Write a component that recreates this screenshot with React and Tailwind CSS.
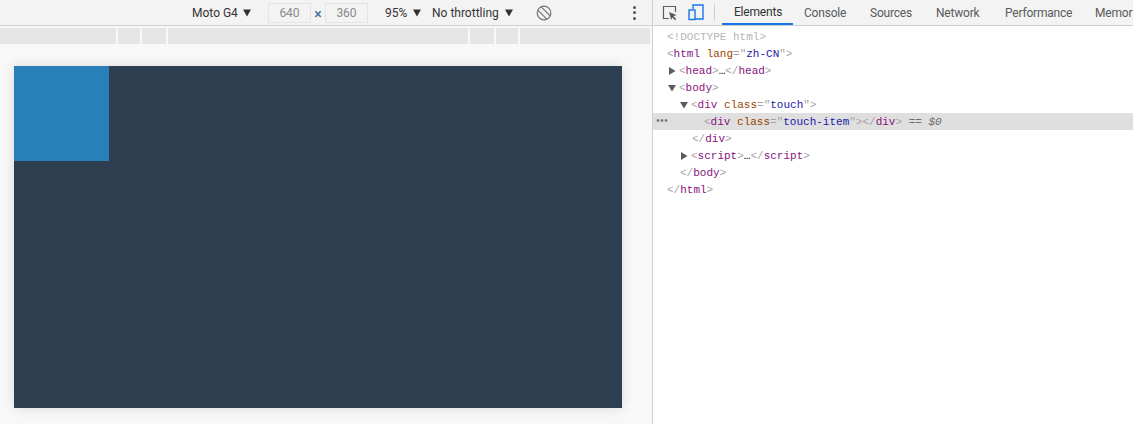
import React from "react";

const uiFont = "font-['Roboto','Noto_Sans',sans-serif]";

function Caret({ open, className = "" }) {
  return (
    <svg width="8" height="8" viewBox="0 0 8 8" className={`shrink-0 ${className}`}>
      {open ? <path d="M0 1h8L4 7.5z" fill="#5f5a60" /> : <path d="M1 0l6.5 4L1 8z" fill="#5f5a60" />}
    </svg>
  );
}

function DownTri({ className = "" }) {
  return (
    <svg width="8" height="8" viewBox="0 0 8 8" className={`shrink-0 ${className}`}>
      <path d="M0 .5h8L4 7.5z" fill="#333" />
    </svg>
  );
}

const B = ({ children }) => <span className="text-[#a89fa8]">{children}</span>;
const T = ({ children }) => <span className="text-[#881280]">{children}</span>;
const A = ({ children }) => <span className="text-[#994500]">{children}</span>;
const V = ({ children }) => <span className="text-[#1a1aa6]">{children}</span>;

function Row({ pad, caret, selected, children }) {
  return (
    <div className={`relative flex h-[17px] items-center whitespace-pre pt-[2px] ${pad} ${selected ? "bg-[#dfdfdf]" : ""}`}>
      {caret !== undefined && <Caret open={caret} className="mr-[3px] ml-[-11px] mt-[-2px]" />}
      <span>{children}</span>
    </div>
  );
}

function App() {
  const tabs = [
    ["Elements", "w-[71px] pl-[12px] text-[#333] border-b-2 border-[#1a73e8]"],
    ["Console", "w-[66px] pl-[11px] text-[#5a5a5a]"],
    ["Sources", "w-[66px] pl-[11px] text-[#5a5a5a]"],
    ["Network", "w-[69px] pl-[11px] text-[#5a5a5a]"],
    ["Performance", "w-[90px] pl-[11px] text-[#5a5a5a]"],
    ["Memory", "w-[60px] pl-[11px] text-[#5a5a5a]"],
  ];

  return (
    <div className={`flex h-[424px] w-[1133px] overflow-hidden bg-white ${uiFont}`}>
      <div className="flex w-[653px] shrink-0 flex-col border-r border-[#cfcfcf] bg-[#f8f8f8]">
        <div className="flex h-[26px] shrink-0 items-center border-b border-[#cfcfcf] bg-[#f3f3f3] pl-[192px] text-[12px] text-[#333]">
          <span className="w-[51px]">Moto G4</span>
          <DownTri />
          <div className="ml-[17px] flex h-[20px] w-[43px] items-center justify-center border border-[#e4e4e4] text-[#8a8a8a]">640</div>
          <span className="mt-[3px] w-[14px] text-center text-[14px] font-medium text-[#3d6f9e]">×</span>
          <div className="flex h-[20px] w-[43px] items-center justify-center border border-[#e4e4e4] text-[#8a8a8a]">360</div>
          <span className="ml-[17px] w-[25px]">95%</span>
          <DownTri className="ml-[3px]" />
          <span className="ml-[11px] w-[70px] whitespace-nowrap">No throttling</span>
          <DownTri className="ml-[3px]" />
          <svg width="16" height="16" viewBox="0 0 16 16" className="ml-[23px]" fill="none" stroke="#77727a" strokeWidth="1.2">
            <circle cx="8" cy="8" r="6.8" />
            <path d="M5.2 1.8l9 9M1.8 5.2l9 9" />
          </svg>
          <div className="ml-[81px] flex flex-col gap-[2.5px]">
            <span className="size-[3px] rounded-full bg-[#555]" />
            <span className="size-[3px] rounded-full bg-[#555]" />
            <span className="size-[3px] rounded-full bg-[#555]" />
          </div>
        </div>

        <div className="mt-[2px] flex h-[16px] w-[650px] shrink-0 gap-[2px]">
          <div className="w-[116px] bg-[#e5e5e5]" />
          <div className="w-[22px] bg-[#e5e5e5]" />
          <div className="w-[24px] bg-[#e5e5e5]" />
          <div className="w-[300px] bg-[#e5e5e5]" />
          <div className="w-[24px] bg-[#e5e5e5]" />
          <div className="w-[22px] bg-[#e5e5e5]" />
          <div className="flex-1 bg-[#e5e5e5]" />
        </div>

        <div className="pt-[22px] pl-[14px]">
          <div className="h-[342px] w-[608px] bg-[#2c3e50] shadow-[0_0_12px_rgba(0,0,0,0.12)]">
            <div className="size-[95px] bg-[#2980b9]" />
          </div>
        </div>
      </div>

      <div className="flex min-w-0 flex-1 flex-col">
        <div className="flex h-[26px] shrink-0 items-stretch border-b border-[#cfcfcf] bg-[#f3f3f3] text-[12px] tracking-[-0.2px]">
          <div className="flex w-[69px] shrink-0 items-center">
            <svg width="16" height="16" viewBox="0 0 16 16" className="ml-[9px]" fill="none">
              <path d="M7 13.5H1.5v-12h12V7" stroke="#5f5a60" strokeWidth="1.2" />
              <path d="M7 7l7.5 3-3 1.2 2.8 2.8-1.2 1.2-2.8-2.8L9.2 15z" fill="#5f5a60" />
            </svg>
            <svg width="16" height="17" viewBox="0 0 16 17" className="ml-[10px]" fill="none" stroke="#1a73e8" strokeWidth="1.4">
              <path d="M5 5V1h10v14H7" />
              <rect x="1" y="6" width="6" height="9.5" />
            </svg>
            <div className="ml-[10px] h-[17px] w-px bg-[#cfcfcf]" />
          </div>
          {tabs.map(([label, cls]) => (
            <div key={label} className={`flex shrink-0 items-center whitespace-nowrap ${cls}`}>
              {label}
            </div>
          ))}
        </div>

        <div className="font-['Liberation_Mono',monospace] pt-[2px] text-[11px]">
          <Row pad="pl-[14px]"><span className="text-[#b5b5b5]">{"<!DOCTYPE html>"}</span></Row>
          <Row pad="pl-[14px]"><B>{"<"}</B><T>html</T> <A>lang</A><B>{'="'}</B><V>zh-CN</V><B>{'">'}</B></Row>
          <Row pad="pl-[26px]" caret={false}><B>{"<"}</B><T>head</T><B>{">"}</B>…<B>{"</"}</B><T>head</T><B>{">"}</B></Row>
          <Row pad="pl-[26px]" caret={true}><B>{"<"}</B><T>body</T><B>{">"}</B></Row>
          <Row pad="pl-[38px]" caret={true}><B>{"<"}</B><T>div</T> <A>class</A><B>{'="'}</B><V>touch</V><B>{'">'}</B></Row>
          <Row pad="pl-[51px]" selected>
            <span className="absolute left-[2px] top-[3px] text-[10px] leading-[12px] tracking-[-2px] text-[#777]">•••</span>
            <B>{"<"}</B><T>div</T> <A>class</A><B>{'="'}</B><V>touch-item</V><B>{'">'}</B><B>{"</"}</B><T>div</T><B>{">"}</B>
            <span className="text-[#6e6e6e]"> == <i>$0</i></span>
          </Row>
          <Row pad="pl-[39px]"><B>{"</"}</B><T>div</T><B>{">"}</B></Row>
          <Row pad="pl-[38px]" caret={false}><B>{"<"}</B><T>script</T><B>{">"}</B>…<B>{"</"}</B><T>script</T><B>{">"}</B></Row>
          <Row pad="pl-[27px]"><B>{"</"}</B><T>body</T><B>{">"}</B></Row>
          <Row pad="pl-[14px]"><B>{"</"}</B><T>html</T><B>{">"}</B></Row>
        </div>
      </div>
    </div>
  );
}

export default App;
